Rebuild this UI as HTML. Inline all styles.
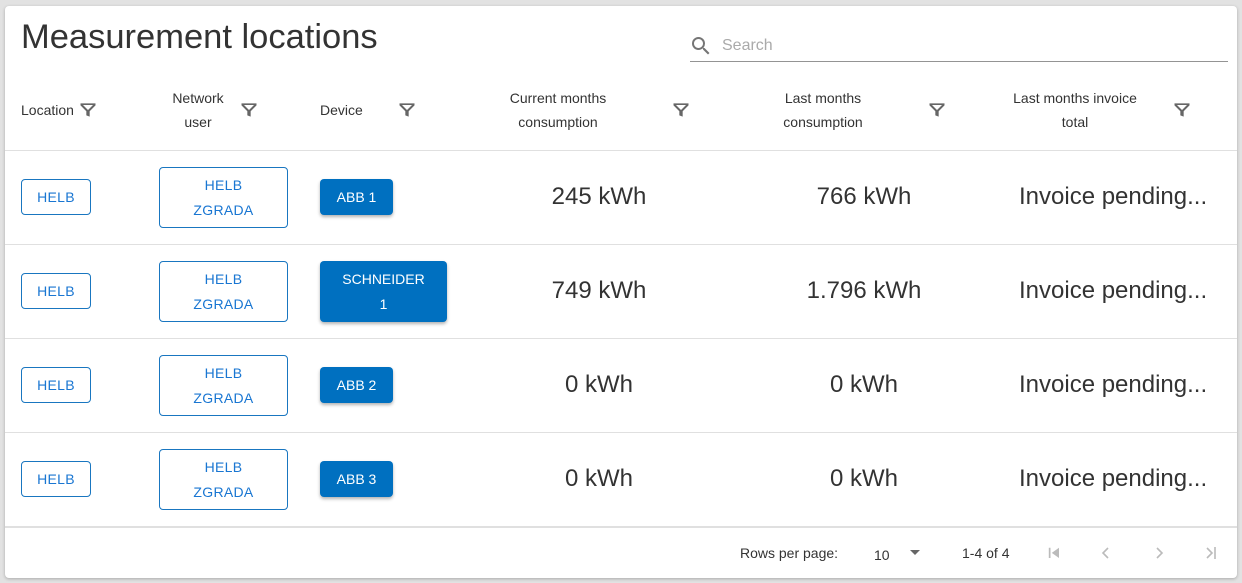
<!DOCTYPE html>
<html><head><style>
body{margin:0;background:#e2e2e2;font-family:"Liberation Sans",Arial,sans-serif;width:1242px;height:583px;overflow:hidden;position:relative}
.card{position:absolute;left:5px;top:6px;width:1232px;height:572px;background:#fff;border-radius:4px;box-shadow:0 1px 3px rgba(0,0,0,.25)}
.a{position:absolute}
h1{position:absolute;left:16px;top:12px;margin:0;font-weight:400;font-size:34.5px;color:#333}
.hd{position:absolute;font-size:14px;color:#333;text-align:center;line-height:24px}
.line{position:absolute;left:0;width:1232px;height:1px;background:#e0e0e0}
.ob{position:absolute;border:1px solid #1976c0;border-radius:4px;color:#1976d2;font-size:14px;text-align:center;box-sizing:border-box;display:flex;align-items:center;justify-content:center;line-height:25px;letter-spacing:.3px}
.fb{position:absolute;background:#0070c0;border-radius:4px;color:#fff;font-size:14px;text-align:center;box-sizing:border-box;display:flex;align-items:center;justify-content:center;line-height:25px;box-shadow:0 2px 3px rgba(0,0,0,.3)}
.num{position:absolute;font-size:24px;color:#333;text-align:center;width:200px}
.inv{position:absolute;left:1014px;font-size:24px;color:#333}
.f{position:absolute;width:20px;height:20px}
.ft{position:absolute;font-size:14px;color:#333}
</style></head><body>
<div class="card">
<h1>Measurement locations</h1>
<svg class="a" style="left:684px;top:28px" width="24" height="24" viewBox="0 0 24 24"><path fill="#757575" d="M15.5 14h-.79l-.28-.27A6.47 6.47 0 0016 9.5 6.5 6.5 0 109.5 16c1.61 0 3.09-.59 4.23-1.57l.27.28v.79l5 4.99L20.49 19l-4.99-5zm-6 0C7.01 14 5 11.99 5 9.5S7.01 5 9.5 5 14 7.01 14 9.5 11.99 14 9.5 14z"/></svg>
<div class="a" style="left:717px;top:31px;font-size:16px;color:#aaa">Search</div>
<div class="a" style="left:685px;top:55px;width:538px;height:1px;background:#949494"></div>

<div class="hd" style="left:16px;top:92px">Location</div>
<div class="hd" style="left:160px;top:80px;width:66px">Network<br>user</div>
<div class="hd" style="left:315px;top:92px">Device</div>
<div class="hd" style="left:493px;top:80px;width:120px">Current months<br>consumption</div>
<div class="hd" style="left:758px;top:80px;width:120px">Last months<br>consumption</div>
<div class="hd" style="left:1000px;top:80px;width:140px">Last months invoice<br>total</div>
<svg class="f" style="left:73px;top:94px" viewBox="0 0 24 24"><path fill="#666" d="M3 4h18v2.5l-7 7V20l-4-1.5v-5L3 6.5z M6 6l6 6 6-6z"/></svg>
<svg class="f" style="left:234px;top:94px" viewBox="0 0 24 24"><path fill="#666" d="M3 4h18v2.5l-7 7V20l-4-1.5v-5L3 6.5z M6 6l6 6 6-6z"/></svg>
<svg class="f" style="left:392px;top:94px" viewBox="0 0 24 24"><path fill="#666" d="M3 4h18v2.5l-7 7V20l-4-1.5v-5L3 6.5z M6 6l6 6 6-6z"/></svg>
<svg class="f" style="left:666px;top:94px" viewBox="0 0 24 24"><path fill="#666" d="M3 4h18v2.5l-7 7V20l-4-1.5v-5L3 6.5z M6 6l6 6 6-6z"/></svg>
<svg class="f" style="left:922px;top:94px" viewBox="0 0 24 24"><path fill="#666" d="M3 4h18v2.5l-7 7V20l-4-1.5v-5L3 6.5z M6 6l6 6 6-6z"/></svg>
<svg class="f" style="left:1167px;top:94px" viewBox="0 0 24 24"><path fill="#666" d="M3 4h18v2.5l-7 7V20l-4-1.5v-5L3 6.5z M6 6l6 6 6-6z"/></svg>

<div class="line" style="top:144px"></div>
<div class="line" style="top:238px"></div>
<div class="line" style="top:332px"></div>
<div class="line" style="top:426px"></div>
<div class="line" style="top:520px;height:2px"></div>

<div class="ob" style="left:16px;top:173px;width:70px;height:36px">HELB</div>
<div class="ob" style="left:154px;top:161px;width:129px;height:61px">HELB<br>ZGRADA</div>
<div class="fb" style="left:315px;top:173px;width:73px;height:36px">ABB 1</div>
<div class="num" style="left:494px;top:177px">245 kWh</div>
<div class="num" style="left:759px;top:177px">766 kWh</div>
<div class="inv" style="top:177px">Invoice pending...</div>

<div class="ob" style="left:16px;top:267px;width:70px;height:36px">HELB</div>
<div class="ob" style="left:154px;top:255px;width:129px;height:61px">HELB<br>ZGRADA</div>
<div class="fb" style="left:315px;top:255px;width:127px;height:61px">SCHNEIDER<br>1</div>
<div class="num" style="left:494px;top:271px">749 kWh</div>
<div class="num" style="left:759px;top:271px">1.796 kWh</div>
<div class="inv" style="top:271px">Invoice pending...</div>

<div class="ob" style="left:16px;top:361px;width:70px;height:36px">HELB</div>
<div class="ob" style="left:154px;top:349px;width:129px;height:61px">HELB<br>ZGRADA</div>
<div class="fb" style="left:315px;top:361px;width:73px;height:36px">ABB 2</div>
<div class="num" style="left:494px;top:365px">0 kWh</div>
<div class="num" style="left:759px;top:365px">0 kWh</div>
<div class="inv" style="top:365px">Invoice pending...</div>

<div class="ob" style="left:16px;top:455px;width:70px;height:36px">HELB</div>
<div class="ob" style="left:154px;top:443px;width:129px;height:61px">HELB<br>ZGRADA</div>
<div class="fb" style="left:315px;top:455px;width:73px;height:36px">ABB 3</div>
<div class="num" style="left:494px;top:459px">0 kWh</div>
<div class="num" style="left:759px;top:459px">0 kWh</div>
<div class="inv" style="top:459px">Invoice pending...</div>

<div class="ft" style="left:735px;top:539px">Rows per page:</div>
<div class="ft" style="left:869px;top:541px">10</div>
<svg class="a" style="left:903px;top:541px" width="14" height="10"><path d="M2 3h10l-5 5z" fill="#666"/></svg>
<div class="ft" style="left:957px;top:539px">1-4 of 4</div>
<svg class="a" style="left:1037px;top:535px" width="24" height="24" viewBox="0 0 24 24"><path fill="#bbb" d="M6 6h2v12H6zm3.5 6l8.5 6V6z" transform="scale(.85) translate(2 2)"/></svg>
<svg class="a" style="left:1089px;top:535px" width="24" height="24" viewBox="0 0 24 24"><path fill="none" stroke="#bbb" stroke-width="1.6" d="M14 7l-5 5 5 5"/></svg>
<svg class="a" style="left:1142px;top:535px" width="24" height="24" viewBox="0 0 24 24"><path fill="none" stroke="#bbb" stroke-width="1.6" d="M10 7l5 5-5 5"/></svg>
<svg class="a" style="left:1194px;top:535px" width="24" height="24" viewBox="0 0 24 24"><path fill="none" stroke="#bbb" stroke-width="1.6" d="M8 7l5 5-5 5M16 6v12"/></svg>
</div>
</body></html>
